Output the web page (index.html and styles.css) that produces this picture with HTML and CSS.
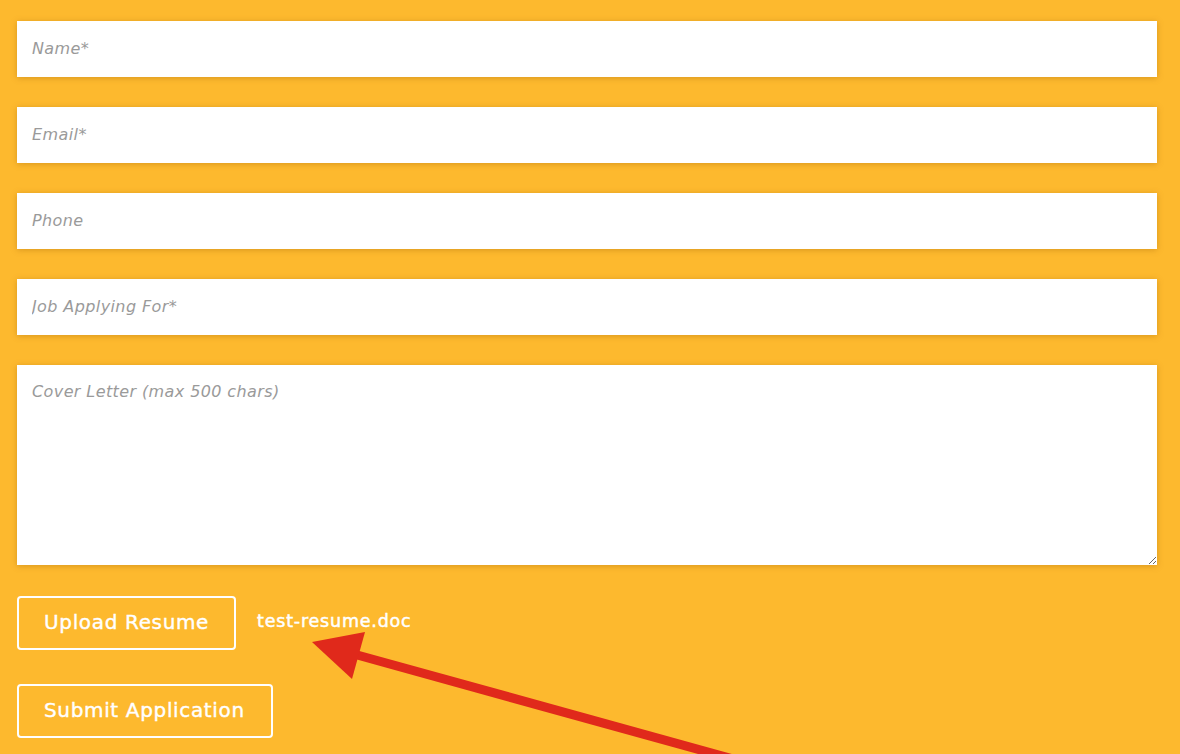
FILE: index.html
```html
<!DOCTYPE html>
<html>
<head>
<meta charset="utf-8">
<link rel="stylesheet" href="styles.css">
</head>
<body>
<form class="form">
  <input class="field" type="text" placeholder="Name*">
  <input class="field" type="text" placeholder="Email*">
  <input class="field" type="text" placeholder="Phone">
  <input class="field" type="text" placeholder="Job Applying For*">
  <textarea class="field area" placeholder="Cover Letter (max 500 chars)"></textarea>
  <div class="upload-row">
    <button type="button" class="btn btn-upload">Upload Resume</button>
    <span class="filename">test-resume.doc</span>
  </div>
  <div class="submit-row">
    <button type="button" class="btn btn-submit">Submit Application</button>
  </div>
</form>
<svg class="arrow" width="1180" height="754" viewBox="0 0 1180 754">
  <line x1="350" y1="653" x2="780" y2="772" stroke="#E0291B" stroke-width="9"/>
  <polygon points="312,642 365,632 352,679" fill="#E0291B"/>
</svg>
</body>
</html>
```
FILE: styles.css
```css
html, body {
  margin: 0;
  padding: 0;
  background: #FDB92E;
  height: 754px;
  overflow: hidden;
}
body {
  position: relative;
  font-family: "DejaVu Sans", "Noto Sans", sans-serif;
}
.form {
  display: flex;
  flex-direction: column;
  padding: 21px 23px 0 17px;
}
.field {
  display: block;
  box-sizing: border-box;
  width: 100%;
  height: 56px;
  margin: 0 0 30px 0;
  padding: 0 15px 2px;
  border: none;
  background: #fff;
  font-family: inherit;
  font-size: 16px;
  letter-spacing: 0.4px;
  font-style: italic;
  color: #555;
  box-shadow: 0 1px 6px rgba(150, 90, 0, 0.35);
  outline: none;
}
.field::placeholder {
  color: #9a9a9a;
  font-style: italic;
}
.area {
  height: 200px;
  padding: 17px 15px;
  resize: vertical;
  margin-bottom: 31px;
}
.upload-row {
  display: flex;
  align-items: center;
  gap: 21px;
}
.btn {
  box-sizing: border-box;
  height: 54px;
  padding: 0 0 2px 25px;
  border: 2px solid #fff;
  border-radius: 4px;
  background: transparent;
  color: #fff;
  font-family: inherit;
  font-size: 20px;
  letter-spacing: 0.65px;
  font-weight: 400;
  text-align: left;
  white-space: nowrap;
  -webkit-text-stroke: 0.4px #fff;
}
.btn-upload {
  width: 219px;
}
.btn-submit {
  width: 256px;
}
.filename {
  color: #fff;
  font-size: 17.5px;
  letter-spacing: 0.8px;
  font-weight: 400;
  white-space: nowrap;
  -webkit-text-stroke: 0.5px #fff;
  margin-top: -5px;
}
.submit-row {
  margin-top: 34px;
}
.arrow {
  position: absolute;
  left: 0;
  top: 0;
  pointer-events: none;
}
```
